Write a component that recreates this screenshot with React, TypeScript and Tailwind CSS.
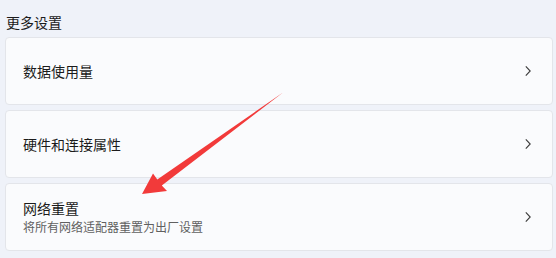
const font = { fontFamily: '"Noto Sans CJK SC", "Noto Sans", sans-serif' };

const rows = [
  { title: "数据使用量" },
  { title: "硬件和连接属性" },
  { title: "网络重置", desc: "将所有网络适配器重置为出厂设置" },
];

function Chevron() {
  return (
    <svg width="8" height="12" viewBox="0 0 8 12" fill="none" className="text-[#3b3b3b]">
      <path d="M1.8 1.3 L6.2 6 L1.8 10.7" stroke="currentColor" strokeWidth="1.1" />
    </svg>
  );
}

export default function App() {
  return (
    <div
      className="relative h-[258px] w-[556px] overflow-hidden bg-[#eff2f9] pl-[5px] pr-[3px] pt-[12px] text-[#1b1b1b]"
      style={font}
    >
      <div className="h-[20px] pl-[1px] text-[14px] leading-[20px]">更多设置</div>
      <div className="mt-[5px] flex flex-col gap-[5px]">
        {rows.map((row) => (
          <div
            key={row.title}
            className="flex h-[68px] items-center justify-between rounded-[4px] border border-[#e3e5ea] bg-[#fafbfd] pl-[17px] pr-[20px]"
          >
            <div className="flex flex-col">
              <span className="text-[14px] leading-[19px]">{row.title}</span>
              {row.desc && (
                <span className="text-[12px] leading-[17px] text-[#606060]">{row.desc}</span>
              )}
            </div>
            <Chevron />
          </div>
        ))}
      </div>

      {/* red annotation arrow */}
      <svg className="pointer-events-none absolute left-0 top-0" width="556" height="258">
        <polygon
          points="142,194 153,173.5 157.3,179.5 283,92.5 161.8,185.5 167,191"
          fill="#f23a3a"
        />
      </svg>
    </div>
  );
}
